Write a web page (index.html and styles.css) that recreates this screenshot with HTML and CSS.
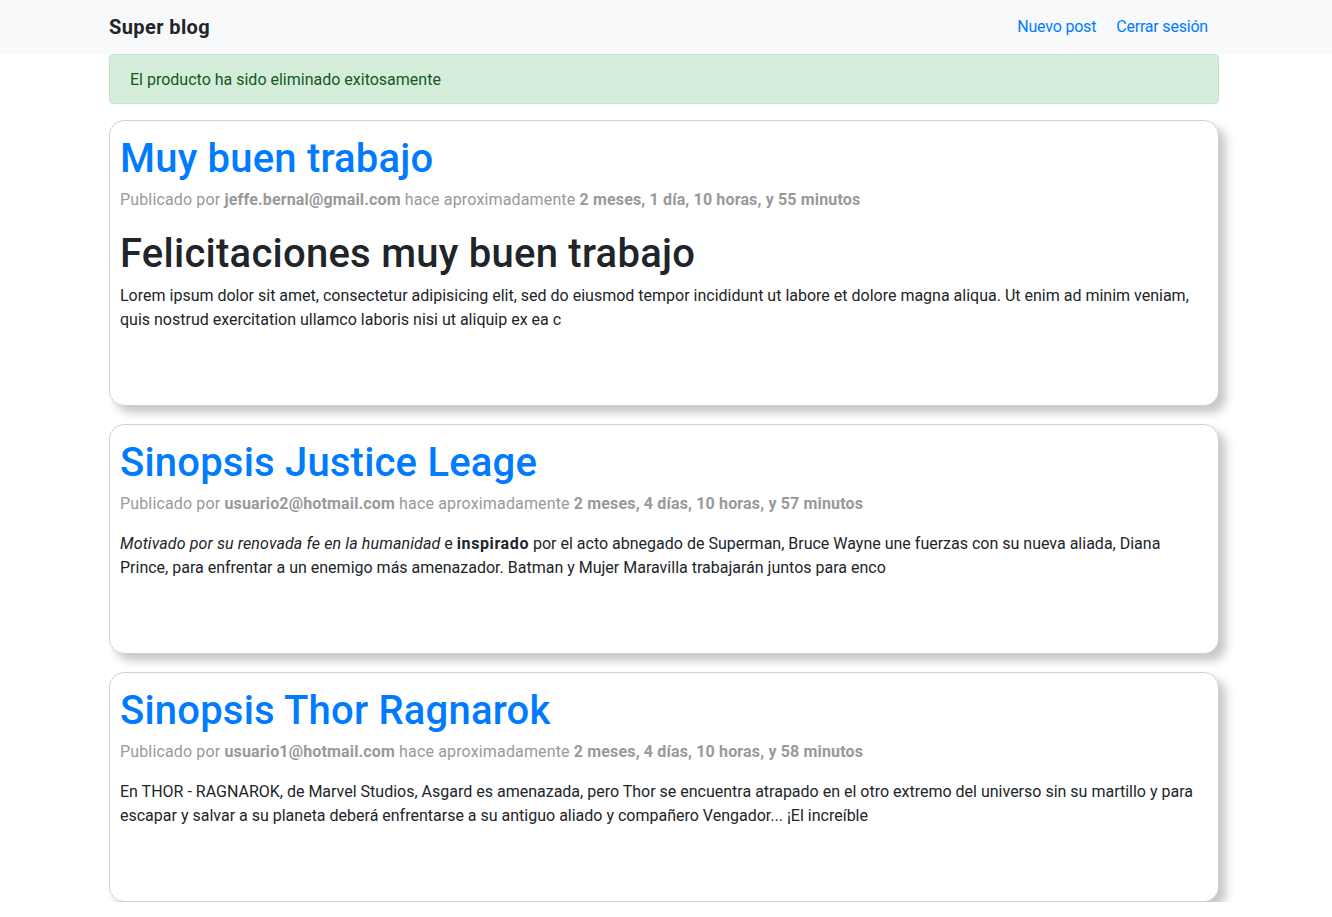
FILE: index.html
```html
<!DOCTYPE html>
<html lang="es">
<head>
<meta charset="utf-8">
<title>Super blog</title>
<link rel="stylesheet" href="styles.css">
</head>
<body>
<nav class="navbar">
  <div class="container nav-inner">
    <a class="brand" href="#">Super blog</a>
    <div class="nav-links">
      <a class="nav-link" href="#">Nuevo post</a>
      <a class="nav-link" href="#">Cerrar sesión</a>
    </div>
  </div>
</nav>
<main class="container">
  <div class="alert">El producto ha sido eliminado exitosamente</div>

  <article class="card">
    <h1 class="post-title"><a href="#">Muy buen trabajo</a></h1>
    <p class="meta">Publicado por <strong>jeffe.bernal@gmail.com</strong> hace aproximadamente <strong>2 meses, 1 día, 10 horas, y 55 minutos</strong></p>
    <div class="post-body">
      <h1 class="body-heading">Felicitaciones muy buen trabajo</h1>
      <p>Lorem ipsum dolor sit amet, consectetur adipisicing elit, sed do eiusmod tempor incididunt ut labore et dolore magna aliqua. Ut enim ad minim veniam, quis nostrud exercitation ullamco laboris nisi ut aliquip ex ea c</p>
    </div>
  </article>

  <article class="card">
    <h1 class="post-title"><a href="#">Sinopsis Justice Leage</a></h1>
    <p class="meta">Publicado por <strong>usuario2@hotmail.com</strong> hace aproximadamente <strong>2 meses, 4 días, 10 horas, y 57 minutos</strong></p>
    <div class="post-body">
      <p><em>Motivado por su renovada fe en la humanidad</em> e <strong>inspirado</strong> por el acto abnegado de Superman, Bruce Wayne une fuerzas con su nueva aliada, Diana Prince, para enfrentar a un enemigo más amenazador. Batman y Mujer Maravilla trabajarán juntos para enco</p>
    </div>
  </article>

  <article class="card">
    <h1 class="post-title"><a href="#">Sinopsis Thor Ragnarok</a></h1>
    <p class="meta">Publicado por <strong>usuario1@hotmail.com</strong> hace aproximadamente <strong>2 meses, 4 días, 10 horas, y 58 minutos</strong></p>
    <div class="post-body">
      <p>En THOR - RAGNAROK, de Marvel Studios, Asgard es amenazada, pero Thor se encuentra atrapado en el otro extremo del universo sin su martillo y para escapar y salvar a su planeta deberá enfrentarse a su antiguo aliado y compañero Vengador... ¡El increíble</p>
    </div>
  </article>
</main>
</body>
</html>
```

FILE: styles.css
```css
* { box-sizing: border-box; }

body {
  margin: 0;
  font-family: Roboto, "Noto Sans", "Liberation Sans", sans-serif;
  font-size: 16px;
  line-height: 1.5;
  color: #212529;
  background: #fff;
}

a { text-decoration: none; }

.container {
  width: 1110px;
  margin-left: calc(50% - 557px);
}

.navbar {
  background: #f8f9fa;
  height: 54px;
}

.nav-inner {
  display: flex;
  align-items: center;
  justify-content: space-between;
  height: 100%;
}

.brand {
  color: #212529;
  font-size: 20px;
  font-weight: 700;
  line-height: 30px;
  letter-spacing: 0.4px;
}

.nav-links {
  display: flex;
  margin-right: 3px;
}

.nav-link {
  color: #007bff;
  padding: 8px 8px;
  margin-left: 4px;
  letter-spacing: -0.2px;
}

.alert {
  margin-top: 0;
  margin-bottom: 16px;
  padding: 13px 20px 11px;
  background: #d4edda;
  border: 1px solid #c3e6cb;
  border-radius: 4px;
  color: #155724;
  line-height: 24px;
}

.card {
  border: 1px solid #d0d0d0;
  border-radius: 15px;
  padding: 11px 10px 57px;
  margin-bottom: 18px;
  box-shadow: 7px 7px 10px rgba(0, 0, 0, 0.22);
  background: #fff;
}

.card:last-child { margin-bottom: 0; }

h1 {
  font-size: 40px;
  font-weight: 500;
  line-height: 1.2;
  margin: 0;
}

.post-title {
  margin: 3px 0 5px;
  letter-spacing: 0.2px;
}

.post-title a { color: #007bff; }

.meta {
  color: #999;
  margin: 0 0 16px;
  letter-spacing: 0.15px;
}

.meta strong { font-weight: 700; }

.body-heading {
  color: #212529;
  padding-top: 2px;
  margin: 0 0 6px;
  letter-spacing: 0.25px;
}

.post-body p { margin: 0 0 16px; }

.post-body em { letter-spacing: 0.12px; }

.post-body strong { letter-spacing: 0.6px; }
```
